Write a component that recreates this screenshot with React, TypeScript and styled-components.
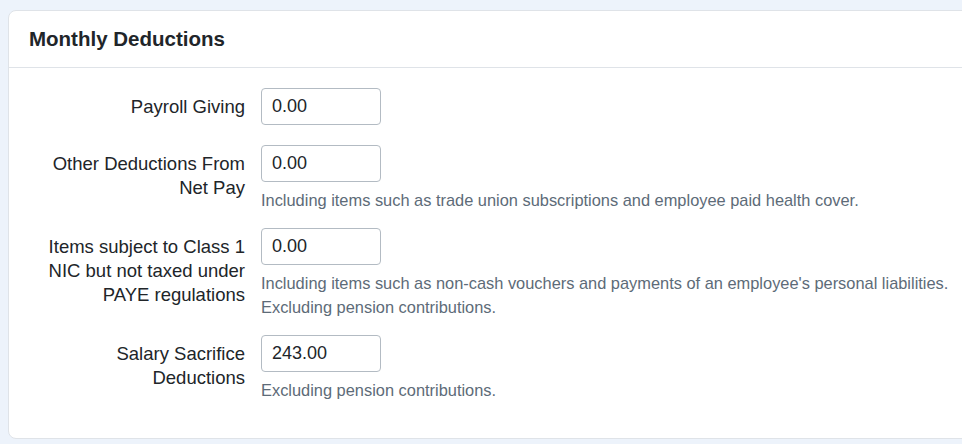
import styled, { createGlobalStyle } from "styled-components"

const GlobalStyle = createGlobalStyle`
html, body {
margin: 0;
padding: 0;
background: #edf3fb;
overflow: hidden;
}
body {
font-family: "Liberation Sans", Arial, sans-serif;
color: #212529;
}
`

const rows = [
    { label: "Payroll Giving", value: "0.00", help: [] as string[] },
    {
        label: "Other Deductions From Net Pay",
        value: "0.00",
        help: ["Including items such as trade union subscriptions and employee paid health cover."],
    },
    {
        label: "Items subject to Class 1 NIC but not taxed under PAYE regulations",
        value: "0.00",
        help: [
            "Including items such as non-cash vouchers and payments of an employee's personal liabilities.",
            "Excluding pension contributions.",
        ],
    },
    {
        label: "Salary Sacrifice Deductions",
        value: "243.00",
        help: ["Excluding pension contributions."],
    },
]

const App = () => {
    return (
        <Page>
            <GlobalStyle />
            <Card>
                <CardHeader>
                    <Title>Monthly Deductions</Title>
                </CardHeader>
                <CardBody>
                    {rows.map((row) => (
                        <Row key={row.label}>
                            <Label>{row.label}</Label>
                            <Field>
                                <Input defaultValue={row.value} />
                                {row.help.map((h) => (
                                    <Help key={h}>{h}</Help>
                                ))}
                            </Field>
                        </Row>
                    ))}
                </CardBody>
            </Card>
        </Page>
    )
}

export default App

const Page = styled.div`
padding: 10px 0 6px 8px;
`
const Card = styled.div`
width: 1000px;
background: #fff;
border: 1px solid #dfe3e8;
border-radius: 8px;
`
const CardHeader = styled.div`
padding: 16px 20px;
border-bottom: 1px solid #dfe3e8;
`
const Title = styled.h5`
margin: 0;
font-size: 20.5px;
line-height: 24px;
font-weight: 700;
`
const CardBody = styled.div`
padding: 20px;
`
const Row = styled.div`
display: flex;
align-items: flex-start;
margin-bottom: 16px;
&:first-child {
margin-bottom: 19px;
}
`
const Label = styled.label`
width: 216px;
flex-shrink: 0;
padding: 7px 16px 7px 0;
text-align: right;
font-size: 18.5px;
line-height: 24px;
`
const Field = styled.div`
display: flex;
flex-direction: column;
`
const Input = styled.input`
box-sizing: border-box;
width: 120px;
height: 37px;
padding: 6px 10px;
border: 1px solid #b3bbc3;
border-radius: 4px;
font-family: inherit;
font-size: 18px;
color: #212529;
outline: none;
`
const Help = styled.div`
font-size: 16.4px;
line-height: 24px;
color: #5d6b78;
white-space: nowrap;
&:first-of-type {
margin-top: 6px;
}
`
